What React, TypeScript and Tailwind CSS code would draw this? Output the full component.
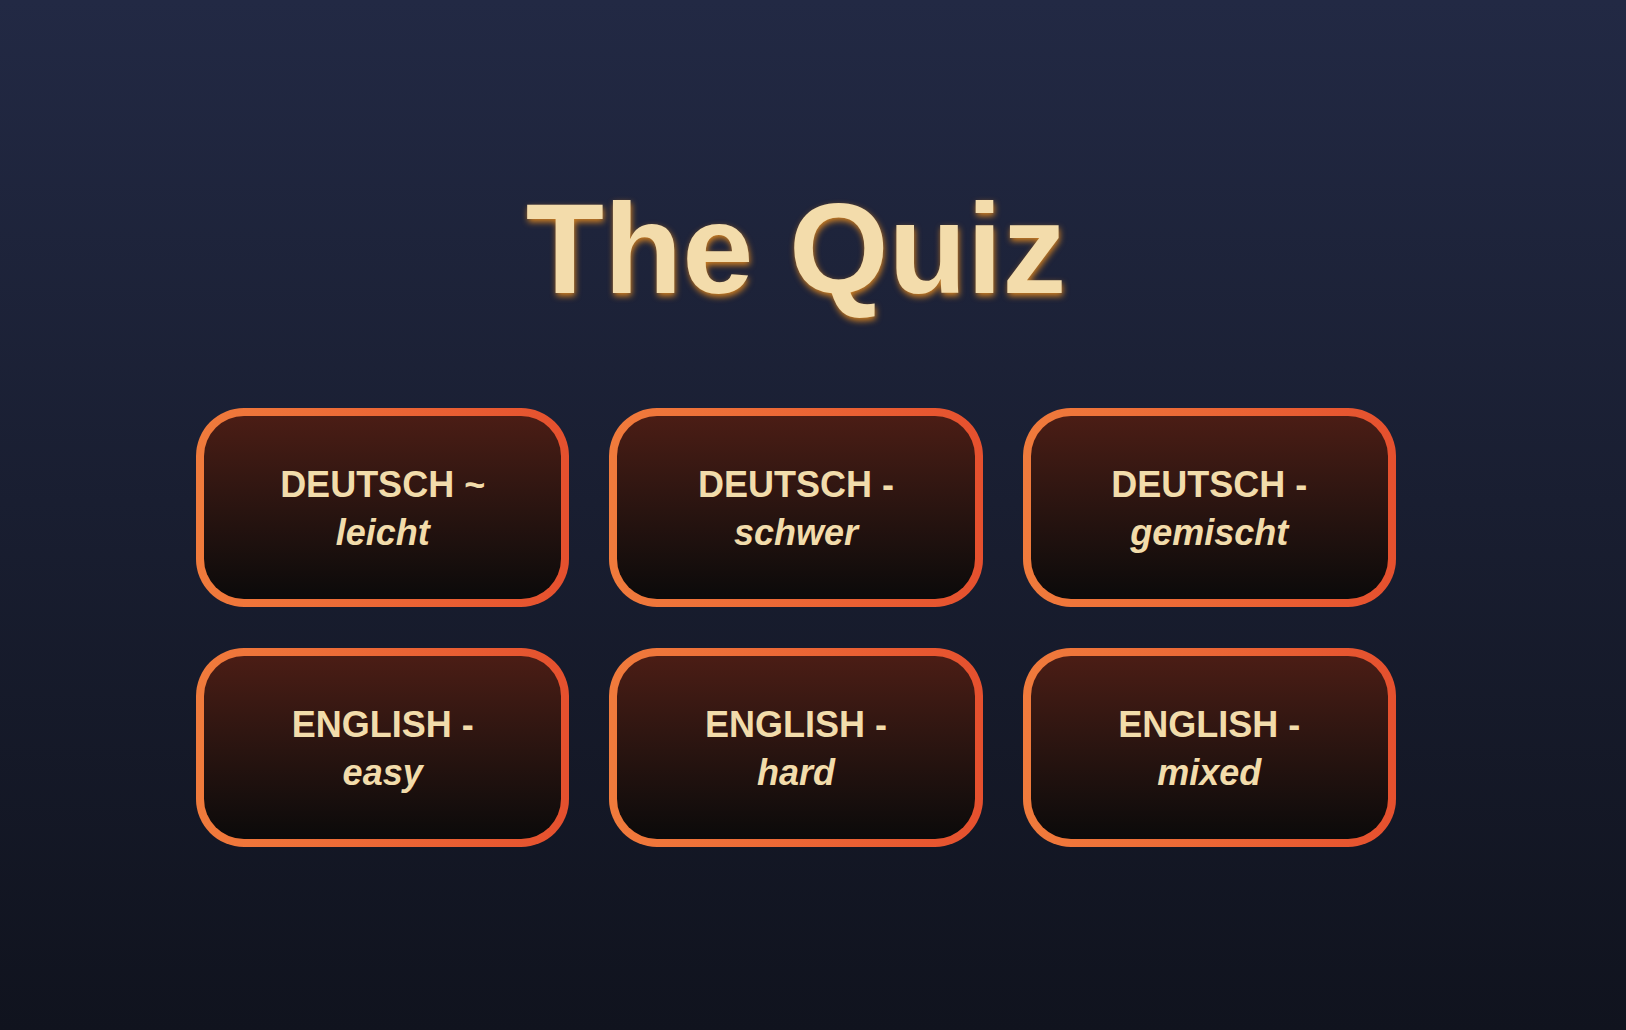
import React from "react";

const items: { lang: string; sep: string; level: string }[] = [
  { lang: "DEUTSCH", sep: "~", level: "leicht" },
  { lang: "DEUTSCH", sep: "-", level: "schwer" },
  { lang: "DEUTSCH", sep: "-", level: "gemischt" },
  { lang: "ENGLISH", sep: "-", level: "easy" },
  { lang: "ENGLISH", sep: "-", level: "hard" },
  { lang: "ENGLISH", sep: "-", level: "mixed" },
];

export default function App() {
  return (
    <div
      className="min-h-screen w-full bg-gradient-to-b from-[#222944] to-[#10131e] flex flex-col items-center pr-[34px] pt-[185px]"
      style={{ fontFamily: '"Liberation Sans", Arial, sans-serif' }}
    >
      <h1 className="text-[128px] leading-none font-bold text-[#f3dcab] [text-shadow:1px_3px_6px_rgba(232,140,30,0.9)]">
        The Quiz
      </h1>
      <div className="mt-[95px] grid grid-cols-3 gap-x-[40px] gap-y-[41px] w-[1200px]">
        {items.map((it, i) => (
          <button
            key={i}
            className="h-[199px] rounded-[48px] p-[8px] bg-gradient-to-r from-[#f07b3c] to-[#e5502e] cursor-pointer"
          >
            <div className="h-full w-full rounded-[40px] bg-gradient-to-b from-[#4b1d15] to-[#0b0a0a] flex flex-col items-center justify-center text-[#f2dcab] text-[36px] leading-[48px] font-bold pt-[2px]">
              <span>
                {it.lang} {it.sep}
              </span>
              <span className="italic">{it.level}</span>
            </div>
          </button>
        ))}
      </div>
    </div>
  );
}
